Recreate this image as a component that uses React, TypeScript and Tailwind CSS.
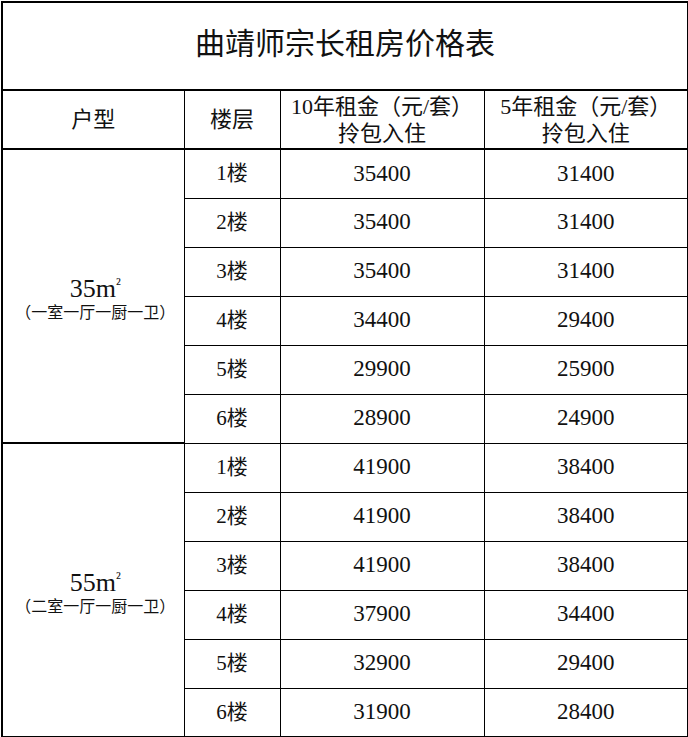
const groups = [
  {
    size: "35",
    desc: "（一室一厅一厨一卫）",
    rows: [
      ["1楼", "35400", "31400"],
      ["2楼", "35400", "31400"],
      ["3楼", "35400", "31400"],
      ["4楼", "34400", "29400"],
      ["5楼", "29900", "25900"],
      ["6楼", "28900", "24900"],
    ],
  },
  {
    size: "55",
    desc: "（二室一厅一厨一卫）",
    rows: [
      ["1楼", "41900", "38400"],
      ["2楼", "41900", "38400"],
      ["3楼", "41900", "38400"],
      ["4楼", "37900", "34400"],
      ["5楼", "32900", "29400"],
      ["6楼", "31900", "28400"],
    ],
  },
]

export default function App() {
  return (
    <div className="w-[688px] h-[737px] bg-white text-[#111] p-[1px] font-['Liberation_Serif','Noto_Sans_CJK_SC',serif]">
      <table className="w-[686px] table-fixed border-collapse border-2 border-black">
        <colgroup>
          <col className="w-[182px]" />
          <col className="w-[96px]" />
          <col className="w-[204px]" />
          <col className="w-[204px]" />
        </colgroup>
        <tbody>
          <tr className="h-[88px]">
            <td colSpan={4} className="border-b-2 border-black text-center text-[30px] leading-none pb-1">
              曲靖师宗长租房价格表
            </td>
          </tr>
          <tr className="h-[59px] text-[22px] leading-[27px]">
            <td className="border border-black border-b-2 text-center">户型</td>
            <td className="border border-black border-b-2 text-center">楼层</td>
            <td className="border border-black border-b-2 text-center">
              10年租金（元/套）
              <br />
              拎包入住
            </td>
            <td className="border border-black border-b-2 text-center">
              5年租金（元/套）
              <br />
              拎包入住
            </td>
          </tr>
          {groups.map((g, gi) =>
            g.rows.map((r, i) => (
              <tr key={`${gi}-${i}`} className="h-[49px]">
                {i === 0 && (
                  <td rowSpan={6} className="border border-black border-b-2 text-center align-middle">
                    <div className="text-[26px] leading-[28px] pl-1">
                      {g.size}m<span className="text-[16px] align-[8px]">²</span>
                    </div>
                    <div className="text-[16px] leading-[20px] -mr-1">{g.desc}</div>
                  </td>
                )}
                <td className="border border-black text-center text-[21px]">{r[0]}</td>
                <td className="border border-black text-center text-[23px]">{r[1]}</td>
                <td className="border border-black text-center text-[23px]">{r[2]}</td>
              </tr>
            ))
          )}
        </tbody>
      </table>
    </div>
  )
}
